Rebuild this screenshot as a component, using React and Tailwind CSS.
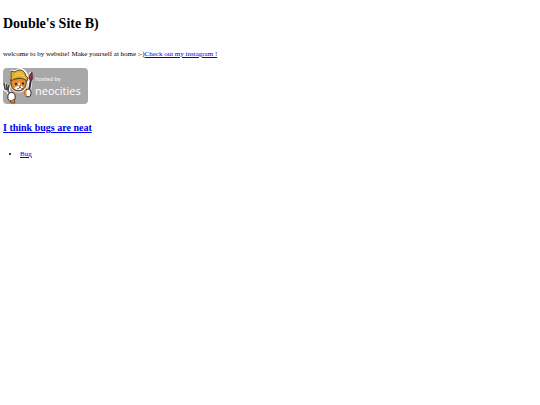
function NeocitiesBadge() {
  return (
    <svg
      viewBox="0 0 85 36"
      role="img"
      aria-label="hosted by neocities"
      className="block h-9 w-[85px]"
    >
      <rect width="85" height="36" rx="4" fill="#a8a8a8" />
      {/* fork */}
      <path d="M4 21L8 28M1 15l1 6 3 1 1-5" fill="none" stroke="#fff" strokeWidth="4" strokeLinejoin="round" />
      <path d="M4 21L8 28M1 15l1 6 3 1 1-5M3.500 16l.5 6" fill="none" stroke="#454545" strokeWidth="1.600" />
      <path d="M4 22L8 28" stroke="#b8b8b8" strokeWidth=".6" />
      {/* brush */}
      <path d="M28 6L26 23" stroke="#fff" strokeWidth="4" strokeLinecap="round" />
      <path d="M28 11L26 23" stroke="#3c2722" strokeWidth="2" />
      <path d="M27 12c-2-3-1-5 2-8 1 4 1 6 0 8z" fill="#9d2734" stroke="#48242a" strokeWidth=".7" />
      {/* cat */}
      <path d="M8 9L8 2l4 1c4-4 10-3 12 3l1 2-1 5c1 7-4 11-8 11S7 21 8 14z" fill="#fff" stroke="#fff" strokeWidth="1" />
      <path d="M8 11c-1 8 2 12 8 12 6-1 8-5 7-13z" fill="#e58b31" stroke="#3e2c21" />
      <path d="M8 11L8 3l4 1c4-4 10-2 11 4l2 2-1 3c-4-3-10-4-16 0z" fill="#dfac2d" stroke="#5b471e" />
      <path d="M11 9c4-3 7-3 11 1M12 6c4-2 7-1 9 2" fill="none" stroke="#f8d455" strokeWidth="1" />
      <path d="M16 13l1 4 3 2c0 2-2 3-4 3s-4-1-5-2l4-2z" fill="#fff" />
      <ellipse cx="13" cy="16" rx="1" ry="1.300" fill="#292321" />
      <ellipse cx="20" cy="15.500" rx="1" ry="1.300" fill="#292321" />
      <path d="M15 17.500h3l-1 1.500z" fill="#492721" />
      <path d="M14 20c1 1 2 1 3-1 1 2 2 2 3 1" fill="none" stroke="#4b3028" strokeWidth=".8" />
      {/* paws */}
      <ellipse cx="8.500" cy="29" rx="3.700" ry="4.500" fill="#fff" stroke="#3d2a22" />
      <path d="M7 32c1 1 2 1 4-1l1 4H8z" fill="#df852e" stroke="#3d2a22" strokeWidth=".6" />
      <ellipse cx="25" cy="25" rx="3.200" ry="4" fill="#fff" stroke="#3d2a22" />
      <path d="M22 22l-1 5 2 2 1-2c-1-1-1-3 0-5z" fill="#df852e" />
      <text x="32" y="13" fontFamily="Lato, sans-serif" fontSize="6" fill="#f5f5f5">
        hosted by
      </text>
      <text x="32" y="27" fontFamily="'Open Sans', sans-serif" fontSize="11" fill="#fff">
        neocities
      </text>
    </svg>
  );
}

function App() {
  return (
    <main className="min-h-screen bg-[#fefefe] px-[3px] py-3 font-['Liberation_Serif',serif] text-[7px] leading-3 text-black">
      <h1 className="text-[14px] leading-6 font-bold">Double's Site B)</h1>
      <p className="mt-3">
        welcome to by website! Make yourself at home :-)
        <a href="#instagram" className="text-[#0000ee] underline">
          Check out my instagram !
        </a>
      </p>
      <a href="#neocities" className="mt-2 block w-fit">
        <NeocitiesBadge />
      </a>
      <h2 className="mt-4 text-[10px] leading-4 font-bold">
        <a href="#bugs" className="text-[#0000ee] underline">
          I think bugs are neat
        </a>
      </h2>
      <ul className="mt-3 list-disc pl-[17px]">
        <li>
          <a href="#bug" className="text-[#0000ee] underline">
            Bug
          </a>
        </li>
      </ul>
    </main>
  );
}

export default App;
